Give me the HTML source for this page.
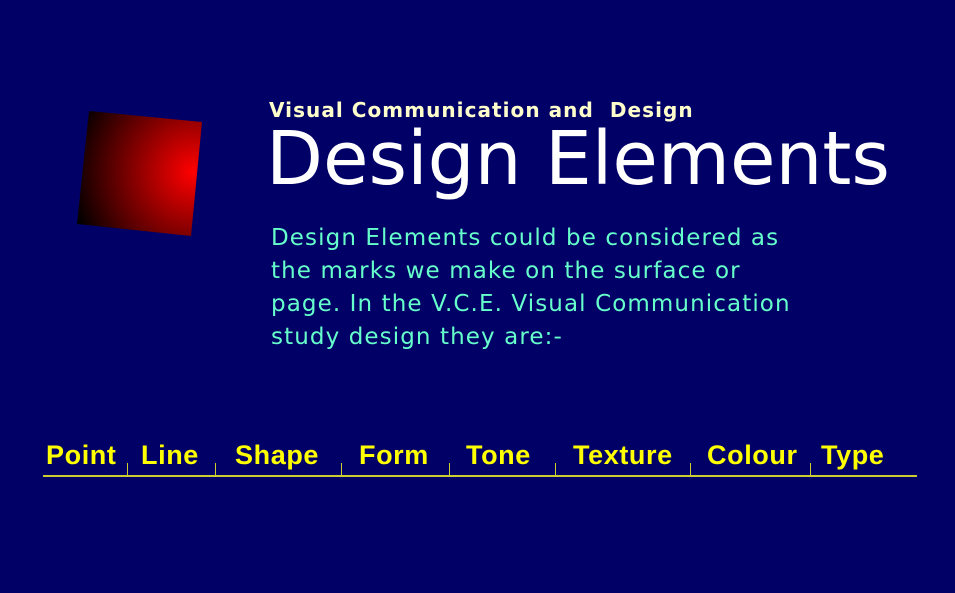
<!DOCTYPE html>
<html><head><meta charset="utf-8"><style>
html,body{margin:0;padding:0}
body{width:955px;height:593px;background:#000066;position:relative;overflow:hidden;font-family:"DejaVu Sans","Liberation Sans",sans-serif}
.a{position:absolute;white-space:nowrap;line-height:1}
.l{position:absolute;top:442px;font:bold 27px "Liberation Sans",sans-serif;letter-spacing:0.6px;color:#ffff00;line-height:1}
.t{position:absolute;top:463px;width:1px;height:13px;background:#cccc33}
</style></head><body>
<svg width="955" height="593" style="position:absolute;left:0;top:0">
<defs><radialGradient id="g" gradientUnits="userSpaceOnUse" cx="193" cy="172" r="125">
<stop offset="0" stop-color="#ff0000"/><stop offset="1" stop-color="#000000"/></radialGradient></defs>
<polygon points="89,111 202,122 191,236 77,224" fill="url(#g)"/>
</svg>
<div class="a" style="left:269px;top:100px;font-weight:bold;font-size:20px;letter-spacing:1.05px;color:#ffffcc">Visual Communication and&nbsp; Design</div>
<div class="a" style="left:266px;top:122px;font-size:74px;color:#ffffff">Design Elements</div>
<div class="a" style="left:271px;top:222px;font-size:23px;letter-spacing:1.1px;line-height:33px;color:#66ffcc">Design Elements could be considered as<br>the marks we make on the surface or<br>page. In the V.C.E. Visual Communication<br>study design they are:-</div>
<span class="l" style="left:46px">Point</span>
<span class="l" style="left:141px">Line</span>
<span class="l" style="left:235px">Shape</span>
<span class="l" style="left:359px">Form</span>
<span class="l" style="left:466px">Tone</span>
<span class="l" style="left:573px">Texture</span>
<span class="l" style="left:707px">Colour</span>
<span class="l" style="left:821px">Type</span>
<div class="t" style="left:127px"></div><div class="t" style="left:215px"></div><div class="t" style="left:341px"></div><div class="t" style="left:449px"></div><div class="t" style="left:555px"></div><div class="t" style="left:690px"></div><div class="t" style="left:810px"></div>
<div style="position:absolute;left:43px;top:475px;width:874px;height:2px;background:#cccc33"></div>
</body></html>
